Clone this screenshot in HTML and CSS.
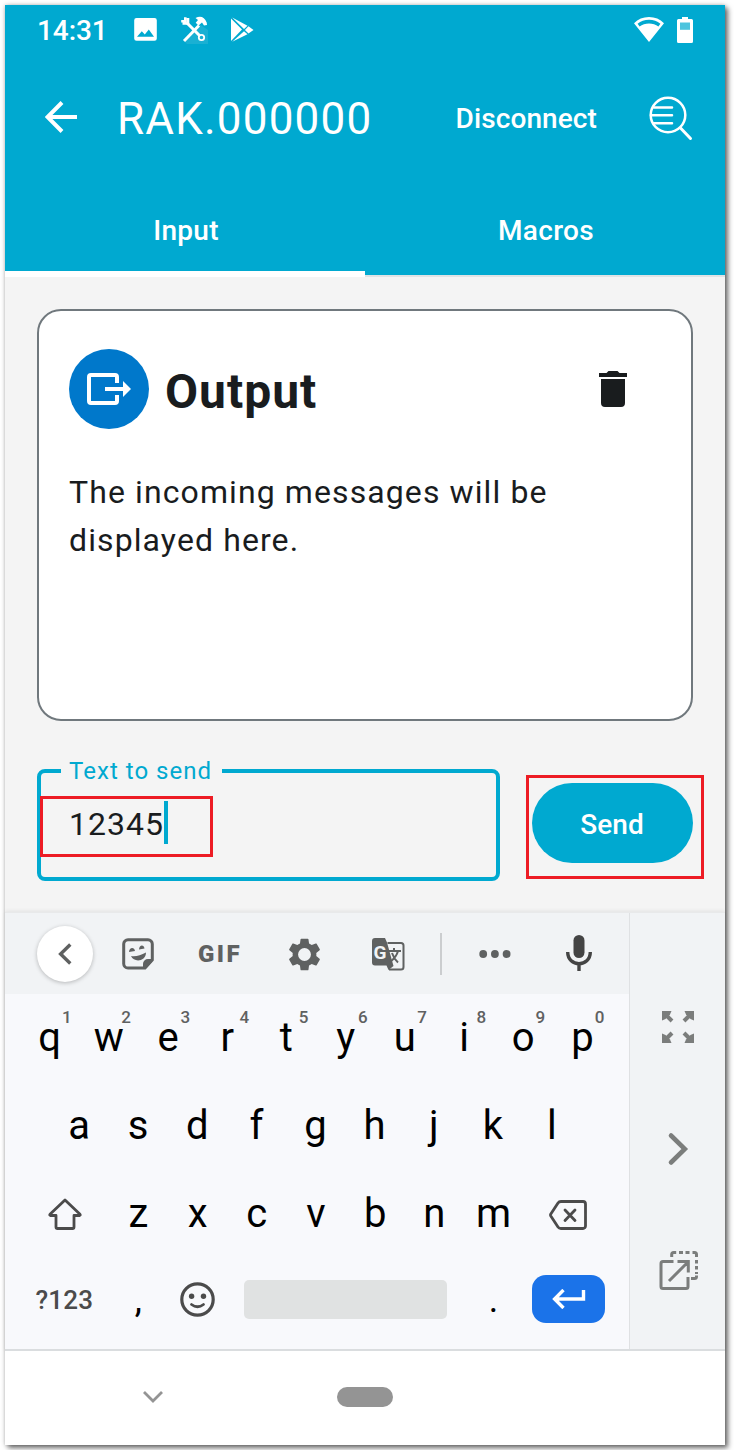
FILE: index.html
```
<!DOCTYPE html>
<html lang="en">
<head>
<meta charset="utf-8">
<title>RAK.000000</title>
<link rel="stylesheet" href="styles.css">
</head>
<body>
<div class="phone">
  <header class="top">
    <div class="status">
      <span class="clock">14:31</span>
      <svg class="st-pic" width="23" height="23" viewBox="0 0 23 23"><path fill="#fff" fill-rule="evenodd" d="M2.500 0h18a2.300 2.300 0 0 1 2.300 2.300v18.200a2.300 2.300 0 0 1-2.300 2.300h-18a2.300 2.300 0 0 1-2.300-2.300V2.300A2.300 2.300 0 0 1 2.500 0zM3 18.800h17l-5.200-7.200-4 5-3-3.300z"/></svg>
      <svg class="st-tools" width="28" height="28" viewBox="0 0 28 28" fill="none" stroke="#fff"><path fill="#2cb5d6" stroke="none" opacity=".6" d="M19 8l9 6v14H7l-3-3z"/><path stroke-width="3" d="M4 25L19 9.500"/><path stroke-width="3" d="M7 7l13 13"/><path fill="#fff" stroke="none" d="M15.500 2c5-2.500 9-1 11.200 4.500L27 9l-3 .5-2-3-3.500 3-2.800-2.800L18 4z"/><path stroke-width="2.600" d="M5.300 1.200v4H1.200M8 2v5.500H2.500"/><circle cx="21.500" cy="21.500" r="2.700" stroke-width="1.800"/></svg>
      <svg class="st-play" width="23" height="26" viewBox="0 0 23 26" fill="#fff"><path d="M0 1.500l11 11L0 24z"/><path d="M1.200.4l15.300 8.400-3.500 3.200zM1.200 24.800L13 14.200l3.500 3z"/><path d="M17.500 9.200l5 3.800-5 3.600-3.600-3.500z"/></svg>
      <svg class="st-wifi" width="30" height="25" viewBox="0 0 30 25"><path fill="#fff" fill-rule="evenodd" d="M15 0c6 0 11 2.200 15 6.200L15 25 0 6.200C4 2.200 9 0 15 0zm0 2.800C10.500 2.800 6.800 4.200 3.600 6.800l2 2.600C8.200 7.700 11.500 6.600 15 6.600s6.800 1.100 9.400 2.800l2-2.600C23.200 4.200 19.500 2.800 15 2.800z"/></svg>
      <svg width="16" height="26" viewBox="0 0 16 26"><path fill="#fff" d="M5 0h6v2h3.500A1.500 1.500 0 0 1 16 3.500v21a1.500 1.500 0 0 1-1.500 1.500h-13A1.500 1.500 0 0 1 0 24.500v-21A1.500 1.500 0 0 1 1.500 2H5z"/><path fill="#4dc4de" d="M3 5.500h10v7.300H3z"/></svg>
    </div>
    <div class="appbar">
      <svg class="back" width="32" height="32" viewBox="0 0 32 32" fill="none" stroke="#fff" stroke-width="4"><path d="M32 16H3M17 1.500L2.500 16 17 30.500"/></svg>
      <h1 class="title">RAK.000000</h1>
      <span class="disconnect">Disconnect</span>
      <svg width="44" height="45" viewBox="0 0 44 45" fill="none" stroke="#fff" stroke-width="2.500" stroke-linecap="round"><circle cx="19" cy="19" r="17.300"/><path d="M5 11.500h18M2 19.300h21M5 27.300h18"/><path stroke-width="3" d="M31.500 32L41.500 42.500"/></svg>
    </div>
    <nav class="tabs">
      <div class="tab tab-active">Input</div>
      <div class="tab">Macros</div>
    </nav>
  </header>

  <main class="content">
    <section class="card">
      <div class="card-head">
        <span class="badge"><svg width="44" height="32" viewBox="0 0 44 32" fill="none" stroke="#fff" stroke-width="4"><path d="M30 10V4a2 2 0 0 0-2-2H4a2 2 0 0 0-2 2v24a2 2 0 0 0 2 2h24a2 2 0 0 0 2-2v-6M18 16h20"/><path fill="#fff" stroke="none" d="M36 8l8 8-8 8z"/></svg></span>
        <h2 class="card-title">Output</h2>
        <svg width="28" height="36" viewBox="0 0 28 36" fill="#191c1e"><path d="M0 2h7.500L9.500 0h9l2 2H28v4H0zM2 8h24v24a4 4 0 0 1-4 4H6a4 4 0 0 1-4-4z"/></svg>
      </div>
      <p class="message">The incoming messages will be displayed here.</p>
    </section>
    <div class="send-row">
      <div class="field">
        <span class="label">Text to send</span>
        <span class="value">12345</span><i class="caret"></i>
        <i class="mark mark-field"></i>
      </div>
      <div class="send-wrap">
        <button class="send">Send</button>
        <i class="mark mark-send"></i>
      </div>
    </div>
  </main>

  <section class="keyboard">
    <div class="keys-panel">
      <div class="tools">
        <span class="collapse"><svg width="14" height="22" viewBox="0 0 14 22" fill="none" stroke="#5f6161" stroke-width="3.400"><path d="M12.300 1.500L2.600 11l9.700 9.500"/></svg></span>
        <svg class="t-sticker" width="32" height="32" viewBox="0 0 32 32"><path fill="none" stroke="#5f6161" stroke-width="3" d="M23 30H6a4.300 4.300 0 0 1-4.300-4.300V6A4.300 4.300 0 0 1 6 1.700h20A4.300 4.300 0 0 1 30.300 6v16z"/><path fill="#5f6161" d="M21 31v-5a5 5 0 0 1 5-5h5l-1.500 3.500L24.500 30zM9 18q7 1 15-3.500c0 9-12 10.500-15 3.500zM7 14c.3-5 5.500-5 6-1zM17 11.500c.3-5 5-5 5.500-1z"/></svg>
        <span class="t-gif">GIF</span>
        <svg class="t-gear" width="33" height="33" viewBox="2 2 20 20"><path fill="#5f6161" d="M19.140 12.940c.04-.3.060-.61.060-.94 0-.32-.02-.64-.07-.94l2.030-1.580c.18-.14.230-.41.120-.61l-1.920-3.320c-.12-.22-.37-.29-.59-.22l-2.390.96c-.5-.38-1.030-.7-1.620-.94l-.36-2.540c-.04-.24-.24-.41-.48-.41h-3.840c-.24 0-.43.170-.47.410l-.36 2.540c-.59.240-1.130.570-1.620.940l-2.390-.96c-.22-.08-.47 0-.59.220L2.740 8.870c-.12.210-.08.470.120.610l2.030 1.580c-.05.300-.09.630-.09.940s.02.640.070.940l-2.030 1.580c-.18.140-.23.410-.12.610l1.920 3.320c.12.220.370.290.590.220l2.390-.96c.5.380 1.030.7 1.620.940l.36 2.540c.05.240.24.410.48.410h3.840c.24 0 .44-.17.470-.41l.36-2.540c.59-.24 1.130-.56 1.620-.94l2.390.96c.22.080.47 0 .59-.22l1.920-3.320c.12-.22.070-.47-.12-.61l-2.010-1.580zM12 15.900A3.900 3.900 0 1 1 12 8.100a3.900 3.900 0 0 1 0 7.800z"/></svg>
        <svg class="t-translate" width="33" height="33" viewBox="0 0 33 33"><path fill="#5f6161" d="M3 0h10l2 4.500 6.500 23.500-5 4-2-4.500H3a3 3 0 0 1-3-3V3a3 3 0 0 1 3-3z"/><path fill="none" stroke="#5f6161" stroke-width="2" d="M15.500 5H29a2.500 2.500 0 0 1 2.500 2.500V29a2.500 2.500 0 0 1-2.500 2.500H17"/><path fill="none" stroke="#5f6161" stroke-width="2" d="M16 13h13M22 10v3M26 13q-1.500 6-8 11M20 15q2 6 6 9.500"/><text class="g" x="1.500" y="21">G</text></svg>
        <i class="divider"></i>
        <svg class="t-more" width="32" height="8" viewBox="0 0 32 8" fill="#5f6161"><circle cx="4.200" cy="4" r="3.900"/><circle cx="15.900" cy="4" r="3.900"/><circle cx="27.600" cy="4" r="3.900"/></svg>
        <svg class="t-mic" width="26" height="36" viewBox="0 0 26 36"><rect x="7.500" width="11" height="23" rx="5.500" fill="#444"/><path fill="none" stroke="#444" stroke-width="3.400" d="M1.700 17c0 15.500 22.600 15.500 22.600 0M13 28v8"/></svg>
      </div>
      <div class="row row-1">
        <b>q<sup>1</sup></b><b>w<sup>2</sup></b><b>e<sup>3</sup></b><b>r<sup>4</sup></b><b>t<sup>5</sup></b><b>y<sup>6</sup></b><b>u<sup>7</sup></b><b>i<sup>8</sup></b><b>o<sup>9</sup></b><b>p<sup>0</sup></b>
      </div>
      <div class="row row-2">
        <b>a</b><b>s</b><b>d</b><b>f</b><b>g</b><b>h</b><b>j</b><b>k</b><b>l</b>
      </div>
      <div class="row row-3">
        <b><svg width="34" height="32" viewBox="0 0 34 32" fill="none" stroke="#4b4b4b" stroke-width="2.800" stroke-linejoin="round"><path d="M17 2L2 16.200q-.8 1.100.5 1.300H8V29a1.500 1.500 0 0 0 1.500 1.500h15A1.500 1.500 0 0 0 26 29V17.500h5.500q1.300-.2.500-1.300z"/></svg></b>
        <b>z</b><b>x</b><b>c</b><b>v</b><b>b</b><b>n</b><b>m</b>
        <b class="backspace"><svg width="38" height="30" viewBox="0 0 38 30" fill="none" stroke="#4b4b4b" stroke-width="2.800" stroke-linejoin="round"><path d="M12 1.500h22A2.500 2.500 0 0 1 36.500 4v22a2.500 2.500 0 0 1-2.500 2.500H12Q10 28.500 9 27L1.800 16q-.6-1 0-2L9 3q1-1.500 3-1.500z"/><path stroke-linecap="round" d="M16 10l10 10.500M26 10L16 20.500"/></svg></b>
      </div>
      <div class="row row-4">
        <b class="sym">?123</b>
        <b class="punct">,</b>
        <b><svg width="35" height="35" viewBox="0 0 35 35" fill="none" stroke="#4b4b4b" stroke-width="3.200"><circle cx="17.500" cy="17.500" r="15.700"/><path stroke-width="2.800" stroke-linecap="round" d="M11.500 22.500q6 4.500 12 0"/><g fill="#4b4b4b" stroke="none"><circle cx="11.600" cy="14.200" r="2.700"/><circle cx="23.500" cy="14.200" r="2.700"/></g></svg></b>
        <b class="space"></b>
        <b class="punct">.</b>
        <b class="enter"><svg width="34" height="20" viewBox="0 0 34 20" fill="none" stroke="#fff" stroke-width="3.400"><path d="M31.500 1v9H3M11.500 1L2.600 10l8.900 9"/></svg></b>
      </div>
    </div>
    <aside class="side">
      <svg width="32" height="32" viewBox="0 0 32 32"><g id="nw"><path fill="#7b7d7c" d="M0 0h9.500L8 3.500 3.500 8 0 9.500z"/><path stroke="#7b7d7c" stroke-width="4" d="M3 3l7 7"/></g><use href="#nw" transform="matrix(-1 0 0 1 32 0)"/><use href="#nw" transform="matrix(1 0 0 -1 0 32)"/><use href="#nw" transform="rotate(180 16 16)"/></svg>
      <svg width="22" height="34" viewBox="0 0 22 34" fill="none" stroke="#7b7d7c" stroke-width="4.600" stroke-linecap="round"><path d="M4 3.500L17.800 17 4 30.500"/></svg>
      <svg width="40" height="40" viewBox="0 0 40 40" fill="none" stroke="#7b7d7c" stroke-width="3"><path d="M14.500 10.500H4a2 2 0 0 0-2 2V35.500a2 2 0 0 0 2 2h23a2 2 0 0 0 2-2V26M10 30L28 12M18.500 10.500h10.800v11"/><path d="M12.700 6V3.500a2 2 0 0 1 2-2h2.500M20 1.500h4M26.500 1.500h4M33.500 1.500h2a2 2 0 0 1 2 2V6M37.500 9v3.500M37.500 15v3.500M37.500 21v2M32 27.500h3.500a2 2 0 0 0 2-2v-1"/></svg>
    </aside>
  </section>

  <footer class="navbar">
    <svg width="20" height="12" viewBox="0 0 20 12" fill="none" stroke="#949494" stroke-width="2.800"><path d="M1 1l9 9 9-9"/></svg>
    <i class="pill"></i>
  </footer>
</div>
</body>
</html>
```
FILE: styles.css
```
* { box-sizing: border-box; }
body { margin: 0; padding: 5px; background: #fff; font-family: Roboto, "Liberation Sans", sans-serif; }
svg { display: block; flex: none; }
i { font-style: normal; }

.phone {
  width: 720px; height: 1440px; display: flex; flex-direction: column; background: #f4f4f4;
  box-shadow: 3px 3px 5px rgba(0,0,0,.55), 0 0 4px rgba(0,0,0,.25);
}

.top { background: #00a9d0; color: #fff; height: 272px; display: flex; flex-direction: column; }
.status { height: 50px; display: flex; align-items: center; padding: 0 32px 1px 32px; }
.clock { font-size: 28px; font-weight: 500; letter-spacing: -.1px; width: 97px; padding-top: 2px; }
.st-tools { margin-left: 23px; }
.st-play { margin-left: 23px; }
.st-wifi { margin-left: auto; margin-right: 13px; }

.appbar { height: 127px; display: flex; align-items: center; padding: 0 32px 0 40px; }
.back { margin-top: -3px; }
.title { margin: 1px auto 0 40px; font-size: 44px; font-weight: 400; letter-spacing: 1.2px; line-height: 52px; }
.disconnect { font-size: 28px; font-weight: 500; letter-spacing: .1px; margin-right: 52px; }
.tabs { flex: 1; height: 95px; display: grid; grid-template-columns: 1fr 1fr; }
.tab {
  height: 95px; display: flex; align-items: center; justify-content: center; padding: 4px 0 0 2px;
  font-size: 28px; font-weight: 500; letter-spacing: .3px;
  background: #00a9d0; border-bottom: 2px solid #dfe3e5;
}
.tab-active { border-bottom: 6px solid #fff; padding-top: 8px; }

.content { height: 635px; padding: 32px 32px 0; display: flex; flex-direction: column; }
.card { height: 412px; border: 2px solid #70787d; border-radius: 24px; background: #fff; padding: 38px 30px; }
.card-head { display: flex; align-items: center; padding-right: 34px; }
.badge { width: 80px; height: 80px; border-radius: 50%; background: #0078cb; display: flex; align-items: center; justify-content: center; }
.card-title { margin: 6px auto 0 16px; font-size: 48px; line-height: 56px; font-weight: 700; color: #191c1e; letter-spacing: 1px; }
.message { margin: 39px 0 0; font-size: 32px; line-height: 48px; letter-spacing: 1.1px; color: #191c1e; }

.send-row { margin-top: 48px; display: flex; justify-content: space-between; align-items: flex-start; }
.field { position: relative; width: 463px; height: 112px; border: 4px solid #00a9d0; border-radius: 8px; padding: 28px 28px 0; display: flex; }
.label { position: absolute; left: 20px; top: -18px; width: 161px; padding-left: 8px; line-height: 32px; font-size: 24px; letter-spacing: 1.03px; white-space: nowrap; color: #00a9d0; background: #f4f4f4; }
.value { font-size: 32px; line-height: 46px; letter-spacing: 1px; color: #191c1e; }
.caret { width: 4px; height: 43px; background: #00a9d0; }
.mark { position: absolute; border: 3px solid #ed1c24; }
.mark-field { left: -1px; top: 23px; width: 173px; height: 61px; }
.send-wrap { position: relative; margin-top: 14px; }
.send { display: block; width: 161px; height: 80px; border: 0; border-radius: 40px; background: #00a9d0; color: #fff; font: 500 28px Roboto, sans-serif; letter-spacing: .1px; padding: 3px 1px 0 0; }
.mark-send { left: -6px; top: -8px; width: 178px; height: 104px; }

.keyboard { height: 439px; display: flex; border-top: 1px solid #e8e9ea; border-bottom: 2px solid #dadddf; box-shadow: 0 -1px 4px rgba(0,0,0,.08); background: #f1f3f5; }
.keys-panel { width: 624px; background: #f8f9fc; }
.tools { height: 81px; background: #f1f3f5; display: flex; align-items: center; padding-left: 32px; }
.collapse { width: 56px; height: 56px; border-radius: 50%; background: #fff; display: flex; align-items: center; justify-content: center; box-shadow: 0 1px 4px rgba(0,0,0,.25); }
.t-sticker { margin-left: 29px; }
.t-gif { width: 48px; margin-left: 44px; font-size: 24px; font-weight: 900; letter-spacing: 2.4px; color: #5f6161; }
.t-gear { margin-left: 42px; margin-top: 2px; }
.t-translate { margin-left: 51px; margin-top: 2px; }
.g { font: 700 19px Roboto, sans-serif; fill: #f1f3f5; }
.divider { width: 2px; height: 42px; margin-left: 35px; background: #cbcdcf; }
.t-more { margin-left: 37px; }
.t-mic { margin: -1px 0 0 55px; }

.row { height: 88px; display: grid; width: 592px; margin-left: 15px; grid-template-columns: repeat(10, 1fr); align-items: center; }
.row b { position: relative; display: flex; justify-content: center; font-size: 40px; line-height: 46px; font-weight: 400; color: #000; }
.row sup { position: absolute; left: 42px; top: -4px; font-size: 17px; line-height: 12px; font-weight: 500; color: #5f6161; }
.row-2 { width: 532px; margin-left: 44.500px; grid-template-columns: repeat(9, 1fr); }
.row-3 { grid-template-columns: 88.8px repeat(7, 1fr) 88.8px; }
.row-3 b:first-child { padding-left: 1px; }
.row .backspace { padding: 2px 0 0; }
.row-4 { height: 83px; grid-template-columns: 88.8px 59.2px 59.2px 236.8px 59.2px 88.8px; }
.row-4 b.sym { font-size: 26px; font-weight: 500; letter-spacing: .2px; color: #4b4b4b; }
.row-4 .punct { font-size: 36px; padding-top: 1px; }
.row-4 .space { height: 39px; border-radius: 5px; background: #e0e2e2; margin: 0 17px; }
.row-4 .enter { height: 48px; width: 73px; margin: -2px 0 0 2px; justify-self: center; align-items: center; border-radius: 14px; background: #1b73e9; }

.side { width: 96px; border-left: 1px solid #dfe1e3; display: flex; flex-direction: column; align-items: center; padding-top: 98px; }
.side svg:nth-child(2) { margin-top: 89px; }
.side svg:nth-child(3) { margin: 85px 0 0 2px; }

.navbar { height: 94px; background: #fff; display: flex; align-items: center; padding-left: 138px; padding-bottom: 2px; }
.pill { width: 56px; height: 20px; border-radius: 10px; background: #949494; margin-left: 174px; }
```
